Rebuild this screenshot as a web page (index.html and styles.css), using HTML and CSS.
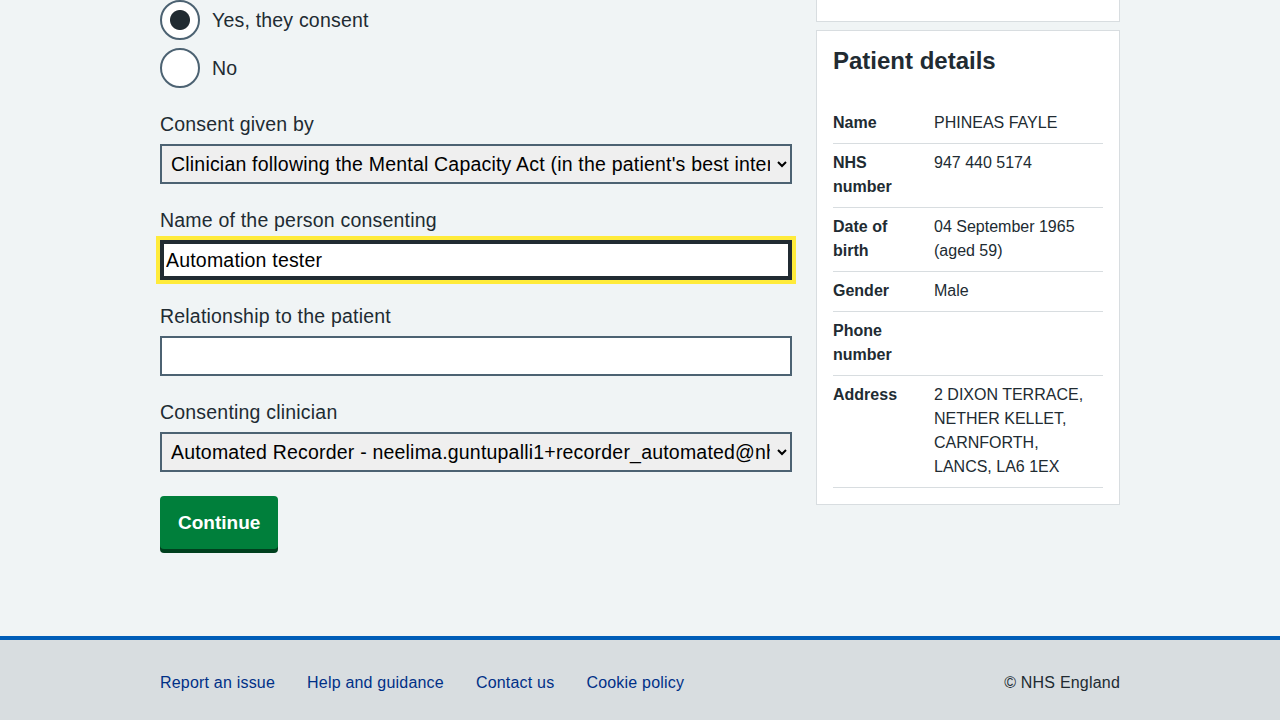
FILE: index.html
```html
<!DOCTYPE html>
<html lang="en">
<head>
<meta charset="utf-8">
<title>Consent</title>
<link rel="stylesheet" href="styles.css">
</head>
<body>
<main class="main">
  <div class="grid">
    <div class="col-main">
      <form class="form" action="#">
        <div class="radios">
          <div class="radio-item">
            <input class="radio" type="radio" name="consent" id="c-yes" checked>
            <label class="radio-label" for="c-yes">Yes, they consent</label>
          </div>
          <div class="radio-item">
            <input class="radio" type="radio" name="consent" id="c-no">
            <label class="radio-label" for="c-no">No</label>
          </div>
        </div>

        <div class="form-group">
          <label class="label" for="given-by">Consent given by</label>
          <select class="select" id="given-by">
            <option>Clinician following the Mental Capacity Act (in the patient's best interest)</option>
          </select>
        </div>

        <div class="form-group">
          <label class="label" for="name">Name of the person consenting</label>
          <input class="input is-focused" id="name" type="text" value="Automation tester">
        </div>

        <div class="form-group">
          <label class="label" for="rel">Relationship to the patient</label>
          <input class="input" id="rel" type="text" value="">
        </div>

        <div class="form-group">
          <label class="label" for="clin">Consenting clinician</label>
          <select class="select" id="clin">
            <option>Automated Recorder - neelima.guntupalli1+recorder_automated@nhs.net</option>
          </select>
        </div>

        <button class="button" type="button">Continue</button>
      </form>
    </div>

    <aside class="col-side">
      <div class="card card-cut"></div>
      <div class="card">
        <h2 class="card-heading">Patient details</h2>
        <dl class="summary">
          <div class="row"><dt>Name</dt><dd>PHINEAS FAYLE</dd></div>
          <div class="row"><dt>NHS number</dt><dd>947 440 5174</dd></div>
          <div class="row"><dt>Date of birth</dt><dd>04 September 1965<br>(aged 59)</dd></div>
          <div class="row"><dt>Gender</dt><dd>Male</dd></div>
          <div class="row"><dt>Phone number</dt><dd></dd></div>
          <div class="row"><dt>Address</dt><dd>2 DIXON TERRACE,<br>NETHER KELLET,<br>CARNFORTH,<br>LANCS, LA6 1EX</dd></div>
        </dl>
      </div>
    </aside>
  </div>
</main>

<footer class="footer">
  <div class="footer-inner">
    <ul class="footer-links">
      <li><a href="#">Report an issue</a></li>
      <li><a href="#">Help and guidance</a></li>
      <li><a href="#">Contact us</a></li>
      <li><a href="#">Cookie policy</a></li>
    </ul>
    <p class="copyright">© NHS England</p>
  </div>
</footer>
</body>
</html>
```

FILE: styles.css
```css
* { box-sizing: border-box; }

html, body {
  margin: 0;
  padding: 0;
}

body {
  background: #f0f4f5;
  color: #212b32;
  font-family: "Liberation Sans", Arial, sans-serif;
  font-size: 19px;
  line-height: 28px;
}

.main {
  width: 960px;
  margin: 0 auto;
  padding-bottom: 87px;
}

.grid {
  display: grid;
  grid-template-columns: 632px 304px;
  column-gap: 24px;
  align-items: start;
}

.form { margin: 0; }

/* Radios */
.radios {
  display: flex;
  flex-direction: column;
  gap: 8px;
  margin-bottom: 24px;
}

.radio-item {
  display: flex;
  align-items: center;
  gap: 12px;
}

.radio {
  appearance: none;
  -webkit-appearance: none;
  margin: 0;
  width: 40px;
  height: 40px;
  border: 2px solid #4c6272;
  border-radius: 50%;
  background: #ffffff;
  flex: none;
}

.radio:checked {
  background: radial-gradient(circle, #212b32 0, #212b32 9.5px, #ffffff 10.5px);
}

.radio-label {
  font-size: 19.5px;
  letter-spacing: 0.2px;
  line-height: 28px;
}

/* Form groups */
.form-group {
  margin-bottom: 24px;
}

.label {
  display: block;
  font-size: 19.5px;
  letter-spacing: 0.2px;
  line-height: 24px;
  margin-bottom: 8px;
}

.select {
  display: block;
  width: 100%;
  height: 40px;
  margin: 0;
  padding: 0 4px 0 5px;
  border: 2px solid #4c6272;
  border-radius: 0;
  background-color: #efefef;
  color: #000000;
  font-family: "Liberation Sans", Arial, sans-serif;
  font-size: 19.5px;
  letter-spacing: 0.2px;
}

.input {
  display: block;
  width: 100%;
  height: 40px;
  margin: 0;
  padding: 0 4px;
  border: 2px solid #4c6272;
  border-radius: 0;
  background: #ffffff;
  color: #000000;
  font-family: "Liberation Sans", Arial, sans-serif;
  font-size: 19.5px;
  letter-spacing: 0.2px;
}

.input.is-focused {
  border-color: #212b32;
  box-shadow: inset 0 0 0 2px #212b32;
  outline: 4px solid #ffeb3b;
  outline-offset: 0;
}

/* Button */
.button {
  display: inline-block;
  margin: 0;
  padding: 12px 16px;
  border: 2px solid transparent;
  border-radius: 4px;
  background: #007f3b;
  box-shadow: 0 4px 0 #00401e;
  color: #ffffff;
  font-family: "Liberation Sans", Arial, sans-serif;
  font-size: 19px;
  font-weight: 700;
  line-height: 25px;
  cursor: pointer;
}

/* Side cards */
.card {
  background: #ffffff;
  border: 1px solid #d8dde0;
  padding: 16px 16px 16px;
}

.card-cut {
  height: 22px;
  border-top: 0;
  padding: 0;
  margin-bottom: 8px;
}

.card-heading {
  margin: 0 0 29px;
  font-size: 24px;
  line-height: 28px;
  font-weight: 700;
}

.summary {
  margin: 0;
  font-size: 16px;
  line-height: 24px;
}

.row {
  display: flex;
  padding: 7px 0 8px;
  border-bottom: 1px solid #d8dde0;
}

.row dt {
  flex: none;
  width: 101px;
  padding-right: 16px;
  font-weight: 700;
}

.row dd {
  margin: 0;
  flex: 1;
}

/* Footer */
.footer {
  border-top: 4px solid #005eb8;
  background: #d8dde0;
  height: 84px;
}

.footer-inner {
  width: 960px;
  margin: 0 auto;
  padding-top: 31px;
  display: flex;
  justify-content: space-between;
  font-size: 16px;
  line-height: 24px;
  letter-spacing: 0.2px;
}

.footer-links {
  list-style: none;
  margin: 0;
  padding: 0;
  display: flex;
  gap: 32px;
}

.footer-links a {
  color: #003087;
  text-decoration: none;
}

.copyright {
  margin: 0;
  color: #212b32;
}
```
